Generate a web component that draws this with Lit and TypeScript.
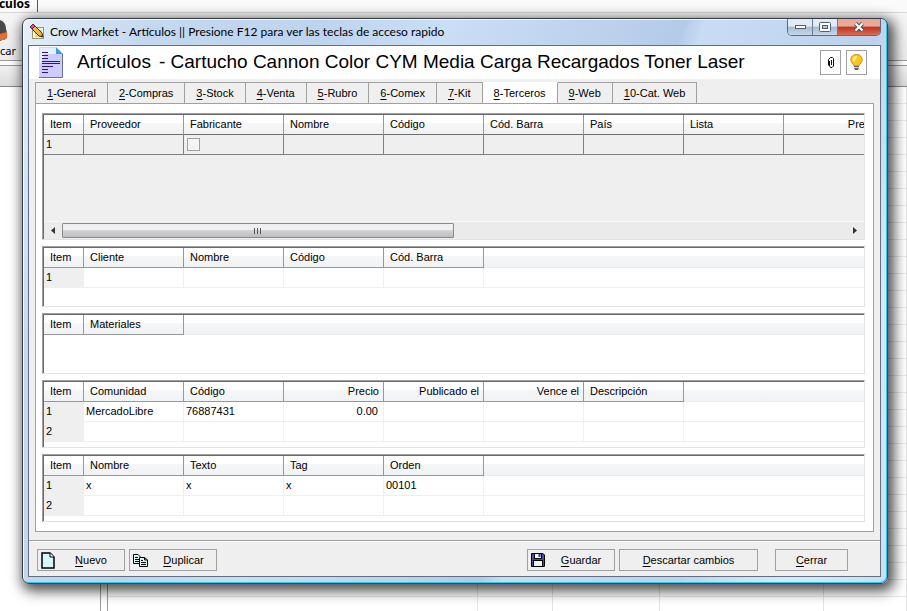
import { LitElement, html, css, svg, nothing } from "lit";
import { customElement, property, state } from "lit/decorators.js";
import { classMap } from "lit/directives/class-map.js";

interface Column { label: string; right?: boolean; check?: boolean; }

@customElement("data-grid")
class DataGrid extends LitElement {
  @property({ attribute: false }) columns: Column[] = [];
  @property({ attribute: false }) rows: string[][] = [];
  @property() label = "";
  @property({ type: Boolean }) muted = false;

  static styles = css`
    :host { display: flex; min-width: 0; }
    .box {
      box-sizing: border-box;
      flex: 1;
      min-width: 0;
      overflow: hidden;
      display: flex;
      flex-direction: column;
      background: #fff;
      border: 1px solid;
      border-color: #a0a0a0 #e3e3e3 #e3e3e3 #a0a0a0;
      box-shadow: inset 1px 1px #696969;
      padding: 1px 0 0 1px;
    }
    .view { flex: 1; overflow: hidden; }
    table { border-collapse: separate; border-spacing: 0; table-layout: fixed; width: 100%; }
    .muted table { width: 840px; }
    .c-item { width: 40px; }
    .c-data { width: 100px; }
    th, td { box-sizing: border-box; padding: 0; text-align: left; font-weight: 400; white-space: nowrap; overflow: hidden; }
    th {
      height: 20px;
      line-height: 19px;
      padding: 0 4px 0 6px;
      background: linear-gradient(#fff 40%, #f6f7f8 41%, #f1f2f4);
      border-right: 1px solid #989898;
      border-bottom: 1px solid #989898;
    }
    th.rest { border-right: 0; border-bottom-color: #ececec; }
    td {
      height: 20px;
      line-height: 18px;
      padding: 0 5px 0 2px;
      vertical-align: top;
      border-right: 1px solid #efefef;
      border-bottom: 1px solid #efefef;
    }
    td.item { background: #efefef; }
    td.rest { border-right: 0; }
    .right { text-align: right; }
    .muted { background: #efefef; }
    .muted td { border-color: #808080; background: #efefef; }
    .muted th { border-bottom-color: #707070; }
    input {
      appearance: none;
      display: block;
      box-sizing: border-box;
      width: 13px;
      height: 13px;
      margin: 3px 0 0 1px;
      border: 1px solid #a0a0a0;
      background: #f4f4f4;
    }
  `;

  render() {
    const cls = (c: Column) => classMap({ right: !!c.right });
    return html`
      <div class=${classMap({ box: true, muted: this.muted })}>
        <div class="view">
          <table aria-label=${this.label}>
            <colgroup>
              <col class="c-item" />
              ${this.columns.map(() => html`<col class="c-data" />`)}
              ${this.muted ? nothing : html`<col />`}
            </colgroup>
            <thead>
              <tr>
                <th>Item</th>
                ${this.columns.map((c) => html`<th class=${cls(c)}>${c.label}</th>`)}
                ${this.muted ? nothing : html`<th class="rest"></th>`}
              </tr>
            </thead>
            <tbody>
              ${this.rows.map((r, i) => html`
                <tr>
                  <td class="item">${i + 1}</td>
                  ${this.columns.map((c, j) => html`<td class=${cls(c)}>${c.check
                    ? html`<input type="checkbox" aria-label=${c.label} />`
                    : r[j] ?? ""}</td>`)}
                  ${this.muted ? nothing : html`<td class="rest"></td>`}
                </tr>`)}
            </tbody>
          </table>
        </div>
        <slot></slot>
      </div>`;
  }
}

const pencil = svg`
  <rect x="3.500" y="3.500" width="11" height="11" fill="#fbf6d2" stroke="#9a9468"/>
  <path d="M6 7h7M6 9.500h7M6 12h7" stroke="#b8b080"/>
  <path d="M1 3L4 0L13 9L14 13L10 12Z" fill="#f2b640" stroke="#5c2c10"/>
  <path d="M1 3L4 0L6 2L3 5Z" fill="#e8506c" stroke="#6c1c3c"/>
  <path d="M12 11L14 13L12 12.500Z" fill="#111"/>`;

const documentIcon = svg`
  <path d="M0.500 0.500H17L23.500 7V30.500H0.500Z" fill="#ccccff"/>
  <path d="M0 0H17V7H6L0 20Z" fill="#e4f0ff"/>
  <path d="M.5 30V.5H17" fill="none" stroke="#c4dcf4"/>
  <path d="M17 0V7H24Z" fill="#3c9ce0"/>
  <path d="M23.500 7V30.500H0" fill="none" stroke="#667098"/>
  <path d="M3 5.500H9M3 8.500H9M3 11.500H9M3 14.500H21M3 16.500H21M3 19.500H14M3 22.500H9M3 25.500H9" stroke="#33108c"/>`;

const clip = svg`
  <path d="M2.500 4V9L3.500 10.500H5L6.500 9V1.500L5.500 .5H3.500L1.500 2.500V8.500M4.500 3V8" fill="none" stroke="#111"/>`;

const bulb = svg`
  <path d="M6.500 .5C3 .5 .8 2.800 .8 5.800C.8 8.500 3.500 9.500 4 12H9C9.500 9.500 12.200 8.500 12.200 5.800C12.200 2.800 10 .5 6.500 .5Z" fill="#ffc414" stroke="#d08a10"/>
  <path d="M2.500 6C2.500 3 4.500 2 7 2C7 4 5 6 4 8Z" fill="#fff4a0"/>
  <path d="M4 12H9V14L8 16H5L4 14Z" fill="#62626e"/>
  <path d="M4 13.500H9" stroke="#d4d4dc"/>`;

const pageIcon = svg`
  <path d="M1 1H9L13 5V16H1Z" fill="#d8f6f8" stroke="#000" stroke-width="1.500"/>
  <path d="M9 1V5H13" fill="#fff" stroke="#000"/>`;

const copyIcon = svg`
  <path d="M.5 .5H5L7.500 3V9.500H.5Z" fill="#e0f6f6" stroke="#000"/>
  <path d="M2 3.500H5M2 5.500H6M2 7.500H6" stroke="#000"/>
  <path d="M6.500 3.500H11.500L14.500 6V12.500H6.500Z" fill="#e0f6f6" stroke="#000"/>
  <path d="M11.500 3.500V6H14.500M8 6.500H10M8 8.500H13M8 10.500H13" fill="none" stroke="#000"/>`;

const disk = svg`
  <path d="M.5 .5H12L13.500 2V13.500H.5Z" fill="#4452a4" stroke="#000"/>
  <rect x="3.500" y=".5" width="7" height="5" fill="#fff" stroke="#000"/>
  <path d="M8.500 1V4" stroke="#2434a0" stroke-width="2"/>
  <rect x="2.500" y="7.500" width="9" height="6" fill="#eef4ff" stroke="#000"/>`;

const icon = (cls: string, w: number, h: number, body: unknown) =>
  html`<svg class=${cls} width=${w} height=${h} viewBox="0 0 ${w} ${h}" aria-hidden="true">${body}</svg>`;

@customElement("app-root")
class AppRoot extends LitElement {
  @state() private tab = 7;

  private tabs = ["1-General", "2-Compras", "3-Stock", "4-Venta", "5-Rubro", "6-Comex", "7-Kit", "8-Terceros", "9-Web", "10-Cat. Web"];

  static styles = css`
    :host {
      display: grid;
      grid-template-columns: minmax(0, 1fr);
      min-height: 100vh;
      font: 11px/16px "Liberation Sans", Arial, sans-serif;
      color: #000;
      background: #fff;
    }
    button { font: inherit; color: inherit; margin: 0; padding: 0; border-radius: 0; }
    u { text-underline-offset: 2px; }

    .back, .window { grid-area: 1 / 1; min-width: 0; }
    .back { display: grid; grid-template-rows: 13px 48px 5px 21px 1fr; overflow: hidden; }
    .strip { background: #fafafa; border-bottom: 1px solid #d8d8d8; display: flex; }
    .strip span { box-sizing: border-box; width: 38px; display: flex; justify-content: flex-end; padding-right: 7px; border-right: 1px solid #555; font: 700 12px/7px "Noto Sans", sans-serif; white-space: nowrap; }
    .bar { background: linear-gradient(#f6f6f6, #ececec); display: flex; flex-direction: column; align-items: flex-start; border-bottom: 1px solid #999; }
    .bar span { font: 11px/14px "Noto Sans", sans-serif; }
    .gap { background: #fff; border-bottom: 1px solid #999; }
    .band { background: linear-gradient(#f2f2f2, #dcdcdc); border-bottom: 1px solid #888; }
    .rows { display: grid; grid-template-columns: 101px 7px 370px 75px 107px 164px 1fr; }
    .rows div { border-right: 1px solid #e4e4e4; background: repeating-linear-gradient(#fff 0 16px, #e8e8e8 16px 17px); }
    .rows .plain { background: #fff; border-color: #999; }

    .window {
      z-index: 1;
      margin: 18px 19px 27px 22px;
      box-sizing: border-box;
      border: 1px solid #343c48;
      border-radius: 7px;
      padding: 0 6px 6px 5px;
      display: flex;
      flex-direction: column;
      background: linear-gradient(110deg, #e4effa 0, #c4d8ee 12%, #bed4ee 28%, #cadef5 40%, #b4cbe8 62%, #c8dcf4 64%, #bcd2ec 80%, #d8e8fa 90%, #c8defa);
      box-shadow: inset -1px -1px #22ccf4, inset 1px 1px #f4faff, 3px 4px 13px 3px rgba(0, 0, 0, .7);
    }
    .title { height: 26px; display: flex; align-items: center; padding-left: 1px; }
    .title h1 { flex: 1; margin: 0 0 0 5px; font: 400 12px/16px Lato, "Noto Sans", sans-serif; }
    .title .caption { align-self: flex-start; display: flex; border: 1px solid #5c6c80; border-top: 0; border-radius: 0 0 5px 5px; overflow: hidden; }
    .caption button { width: 25px; height: 16px; display: grid; place-items: center; border: 0; border-right: 1px solid #6c7c90; background: linear-gradient(#e2ebf5 45%, #a8bace 50%, #c6d8ea); }
    .caption .close { width: 42px; border: 0; background: linear-gradient(#eaa898 45%, #bc3420 50%, #d86c50); }

    .client { flex: 1; min-width: 0; display: flex; flex-direction: column; background: #efefef; border: 1px solid #60707e; }
    .head { display: flex; align-items: center; height: 33px; background: #fff; padding: 0 13px 0 10px; }
    .head h2 { flex: 1; margin: 0 0 0 14px; display: flex; gap: 8px; font-size: 19px; line-height: 30px; font-weight: 400; height: 32px; white-space: nowrap; }
    .head svg { flex: none; }
    .head button { width: 21px; height: 25px; margin-left: 5px; display: grid; place-items: center; background: #fff; border: 1px solid #a0a0a0; }

    .tabs { display: flex; margin: 3px 0 0 6px; }
    .tabs button { height: 22px; margin-bottom: -1px; border: 1px solid #a0a0a0; border-left-width: 0; background: #efefef; white-space: nowrap; padding: 0 11px; }
    .tabs button:first-child { border-left-width: 1px; }
    .tabs .on { background: #fff; border-top-color: #fff; border-bottom-color: #fff; }
    .panel { flex: 1; min-width: 0; margin: 0 6px; padding: 9px 8px 9px 6px; background: #fff; border: 1px solid #a0a0a0; display: flex; flex-direction: column; gap: 6px; }
    .tall { flex: 1 0 120px; }
    .low { flex: none; height: 61px; }
    .mid { flex: none; height: 68px; }
    .scroll { display: flex; align-items: center; height: 17px; background: #ebebeb; border-top: 1px solid #f8f8f8; }
    .scroll button { border: 0; width: 18px; height: 17px; background: none; display: grid; place-items: center; }
    .track { flex: 1; }
    .thumb { box-sizing: border-box; width: 50%; height: 15px; display: grid; place-items: center; border: 1px solid #8c8c90; border-radius: 1px; background: linear-gradient(#f0f0f0 45%, #d4d4d6 50%, #bcbcc0); }

    .foot { margin-top: 8px; border-top: 1px solid #a0a0a0; box-shadow: inset 0 1px #fff; padding: 8px 32px 5px 8px; display: flex; gap: 4px; }
    .foot button { box-sizing: border-box; width: 88px; height: 22px; display: flex; align-items: center; border: 1px solid #a0a0a0; background: #efefef; padding: 0 3px; }
    .foot span { flex: 1; text-align: center; }
    .foot .icon span { padding-left: 6px; }
    .foot .space { flex: 1; }
    .foot .wide { width: 139px; }
    .foot .last { width: 73px; margin-left: 13px; }
  `;

  render() {
    const c = (label: string, right = false): Column => ({ label, right });
    return html`
      <div class="back">
        <div class="strip"><span>Artículos</span></div>
        <div class="bar">
          ${icon("person", 8, 31, svg`
            <path d="M0 7Q6 9 6 16Q8 20 7 25L0 28Z" fill="#4a4a4c"/>
            <path d="M0 21L7 19V24L5 27H0Z" fill="#ec6c30"/>`)}
          <span>car</span>
        </div>
        <div class="gap"></div>
        <div class="band"></div>
        <div class="rows"><div class="plain"></div><div class="plain"></div><div></div><div></div><div></div><div></div><div></div></div>
      </div>
      <main class="window">
        <div class="title">
          ${icon("app", 16, 16, pencil)}
          <h1>Crow Market - Artículos || Presione F12 para ver las teclas de acceso rapido</h1>
          <div class="caption">
            <button aria-label="Minimizar">${icon("", 13, 6, svg`<rect x="1.500" y="1.500" width="10" height="3" fill="#fff" stroke="#525c70"/>`)}</button>
            <button aria-label="Maximizar">${icon("", 12, 10, svg`<rect x=".5" y=".5" width="11" height="9" rx="1" fill="#fff" stroke="#525c70"/><rect x="3.500" y="3.500" width="5" height="3" fill="#b8c8dc" stroke="#525c70"/>`)}</button>
            <button class="close" aria-label="Cerrar ventana">${icon("", 12, 10, svg`<path d="M2.500 1.500L9.500 8.500M9.500 1.500L2.500 8.500" stroke="#4c5468" stroke-width="4"/><path d="M2.500 1.500L9.500 8.500M9.500 1.500L2.500 8.500" stroke="#fff" stroke-width="2"/>`)}</button>
          </div>
        </div>
        <div class="client">
          <header class="head">
            ${icon("", 24, 31, documentIcon)}
            <h2><span>Artículos</span><span>- Cartucho Cannon Color CYM Media Carga Recargados Toner Laser</span></h2>
            <button aria-label="Adjuntos">${icon("", 8, 11, clip)}</button>
            <button aria-label="Ayuda">${icon("", 13, 17, bulb)}</button>
          </header>
          <nav class="tabs" role="tablist">
            ${this.tabs.map((t, i) => html`
              <button role="tab" aria-selected=${i === this.tab} class=${classMap({ on: i === this.tab })} @click=${() => (this.tab = i)}><u>${t[0]}</u>${t.slice(1)}</button>`)}
          </nav>
          <section class="panel">
            <data-grid class="tall" label="Proveedores" muted
              .columns=${[c("Proveedor"), { label: "Fabricante", check: true }, c("Nombre"), c("Código"), c("Cód. Barra"), c("País"), c("Lista"), c("Precio", true)]}
              .rows=${[[]]}>
              <div class="scroll">
                <button aria-label="Izquierda">${icon("", 4, 7, svg`<path d="M4 0V7L0 3.500Z" fill="#333"/>`)}</button>
                <div class="track"><div class="thumb">${icon("", 8, 6, svg`<path d="M.5 0V6M3.500 0V6M6.500 0V6" stroke="#555"/>`)}</div></div>
                <button aria-label="Derecha">${icon("", 4, 7, svg`<path d="M0 0V7L4 3.500Z" fill="#333"/>`)}</button>
              </div>
            </data-grid>
            <data-grid class="low" label="Clientes" .columns=${[c("Cliente"), c("Nombre"), c("Código"), c("Cód. Barra")]} .rows=${[[]]}></data-grid>
            <data-grid class="low" label="Materiales" .columns=${[c("Materiales")]}></data-grid>
            <data-grid class="mid" label="Comunidades"
              .columns=${[c("Comunidad"), c("Código"), c("Precio", true), c("Publicado el", true), c("Vence el", true), c("Descripción")]}
              .rows=${[["MercadoLibre", "76887431", "0.00"], []]}></data-grid>
            <data-grid class="mid" label="Textos" .columns=${[c("Nombre"), c("Texto"), c("Tag"), c("Orden")]} .rows=${[["x", "x", "x", "00101"], []]}></data-grid>
          </section>
          <footer class="foot">
            <button class="icon">${icon("", 14, 17, pageIcon)}<span><u>N</u>uevo</span></button>
            <button class="icon">${icon("", 15, 13, copyIcon)}<span><u>D</u>uplicar</span></button>
            <div class="space"></div>
            <button class="icon">${icon("", 14, 14, disk)}<span><u>G</u>uardar</span></button>
            <button class="wide"><span><u>D</u>escartar cambios</span></button>
            <button class="last"><span><u>C</u>errar</span></button>
          </footer>
        </div>
      </main>`;
  }
}
